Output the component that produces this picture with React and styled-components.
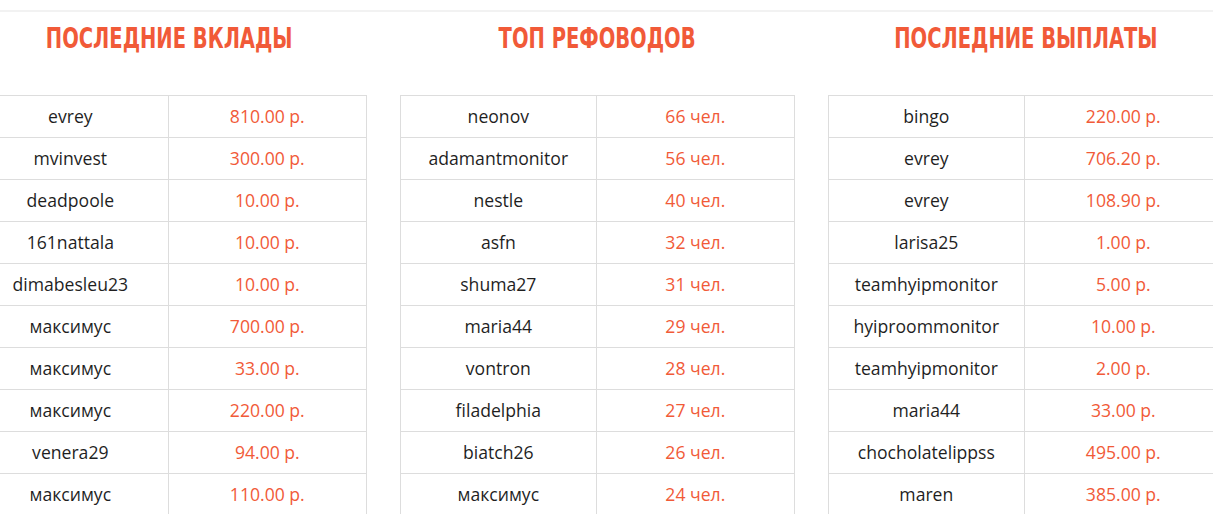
import React from 'react'
import styled, { createGlobalStyle } from 'styled-components'

const GlobalStyle = createGlobalStyle`
  html, body {
    margin: 0;
    padding: 0;
    background: #fff;
    overflow: hidden;
  }
`

const Page = styled.div`
  border-top: 2px solid #f2f2f2;
  margin-top: 10px;
  font-family: "Open Sans", "Liberation Sans", sans-serif;
`

const Columns = styled.div`
  display: flex;
  gap: 33px;
  margin-left: -28px;
`

const Column = styled.section`
  width: 395px;
  flex: 0 0 395px;
`

const Title = styled.h2`
  margin: 0;
  height: 83px;
  padding-top: 10px;
  box-sizing: border-box;
  text-align: center;
  font-family: "Liberation Sans Narrow", "DejaVu Sans Condensed", sans-serif;
  font-weight: 700;
  font-size: 28px;
  line-height: 34px;
  color: #f15a38;
  text-transform: uppercase;
  white-space: nowrap;

  span {
    display: inline-block;
    transform: scaleX(0.775);
    transform-origin: center;
  }
`

const Table = styled.table`
  width: 100%;
  border-collapse: collapse;
  table-layout: fixed;
`

const Cell = styled.td`
  width: ${p => (p.$accent ? 'auto' : '49.4%')};
  height: 39px;
  padding: 0 0 2px;
  border: 1px solid #dddddd;
  text-align: center;
  font-size: 17.6px;
  color: ${p => (p.$accent ? '#f15a38' : '#1f1f1f')};
`

const blocks = [
  {
    title: 'Последние вклады',
    rows: [
      ['evrey', '810.00 р.'],
      ['mvinvest', '300.00 р.'],
      ['deadpoole', '10.00 р.'],
      ['161nattala', '10.00 р.'],
      ['dimabesleu23', '10.00 р.'],
      ['максимус', '700.00 р.'],
      ['максимус', '33.00 р.'],
      ['максимус', '220.00 р.'],
      ['venera29', '94.00 р.'],
      ['максимус', '110.00 р.']
    ]
  },
  {
    title: 'Топ рефоводов',
    rows: [
      ['neonov', '66 чел.'],
      ['adamantmonitor', '56 чел.'],
      ['nestle', '40 чел.'],
      ['asfn', '32 чел.'],
      ['shuma27', '31 чел.'],
      ['maria44', '29 чел.'],
      ['vontron', '28 чел.'],
      ['filadelphia', '27 чел.'],
      ['biatch26', '26 чел.'],
      ['максимус', '24 чел.']
    ]
  },
  {
    title: 'Последние выплаты',
    rows: [
      ['bingo', '220.00 р.'],
      ['evrey', '706.20 р.'],
      ['evrey', '108.90 р.'],
      ['larisa25', '1.00 р.'],
      ['teamhyipmonitor', '5.00 р.'],
      ['hyiproommonitor', '10.00 р.'],
      ['teamhyipmonitor', '2.00 р.'],
      ['maria44', '33.00 р.'],
      ['chocholatelippss', '495.00 р.'],
      ['maren', '385.00 р.']
    ]
  }
]

export default function App() {
  return (
    <Page>
      <GlobalStyle />
      <Columns>
        {blocks.map(b => (
          <Column key={b.title}>
            <Title>
              <span>{b.title}</span>
            </Title>
            <Table>
              <tbody>
                {b.rows.map((r, i) => (
                  <tr key={i}>
                    <Cell>{r[0]}</Cell>
                    <Cell $accent>{r[1]}</Cell>
                  </tr>
                ))}
              </tbody>
            </Table>
          </Column>
        ))}
      </Columns>
    </Page>
  )
}
